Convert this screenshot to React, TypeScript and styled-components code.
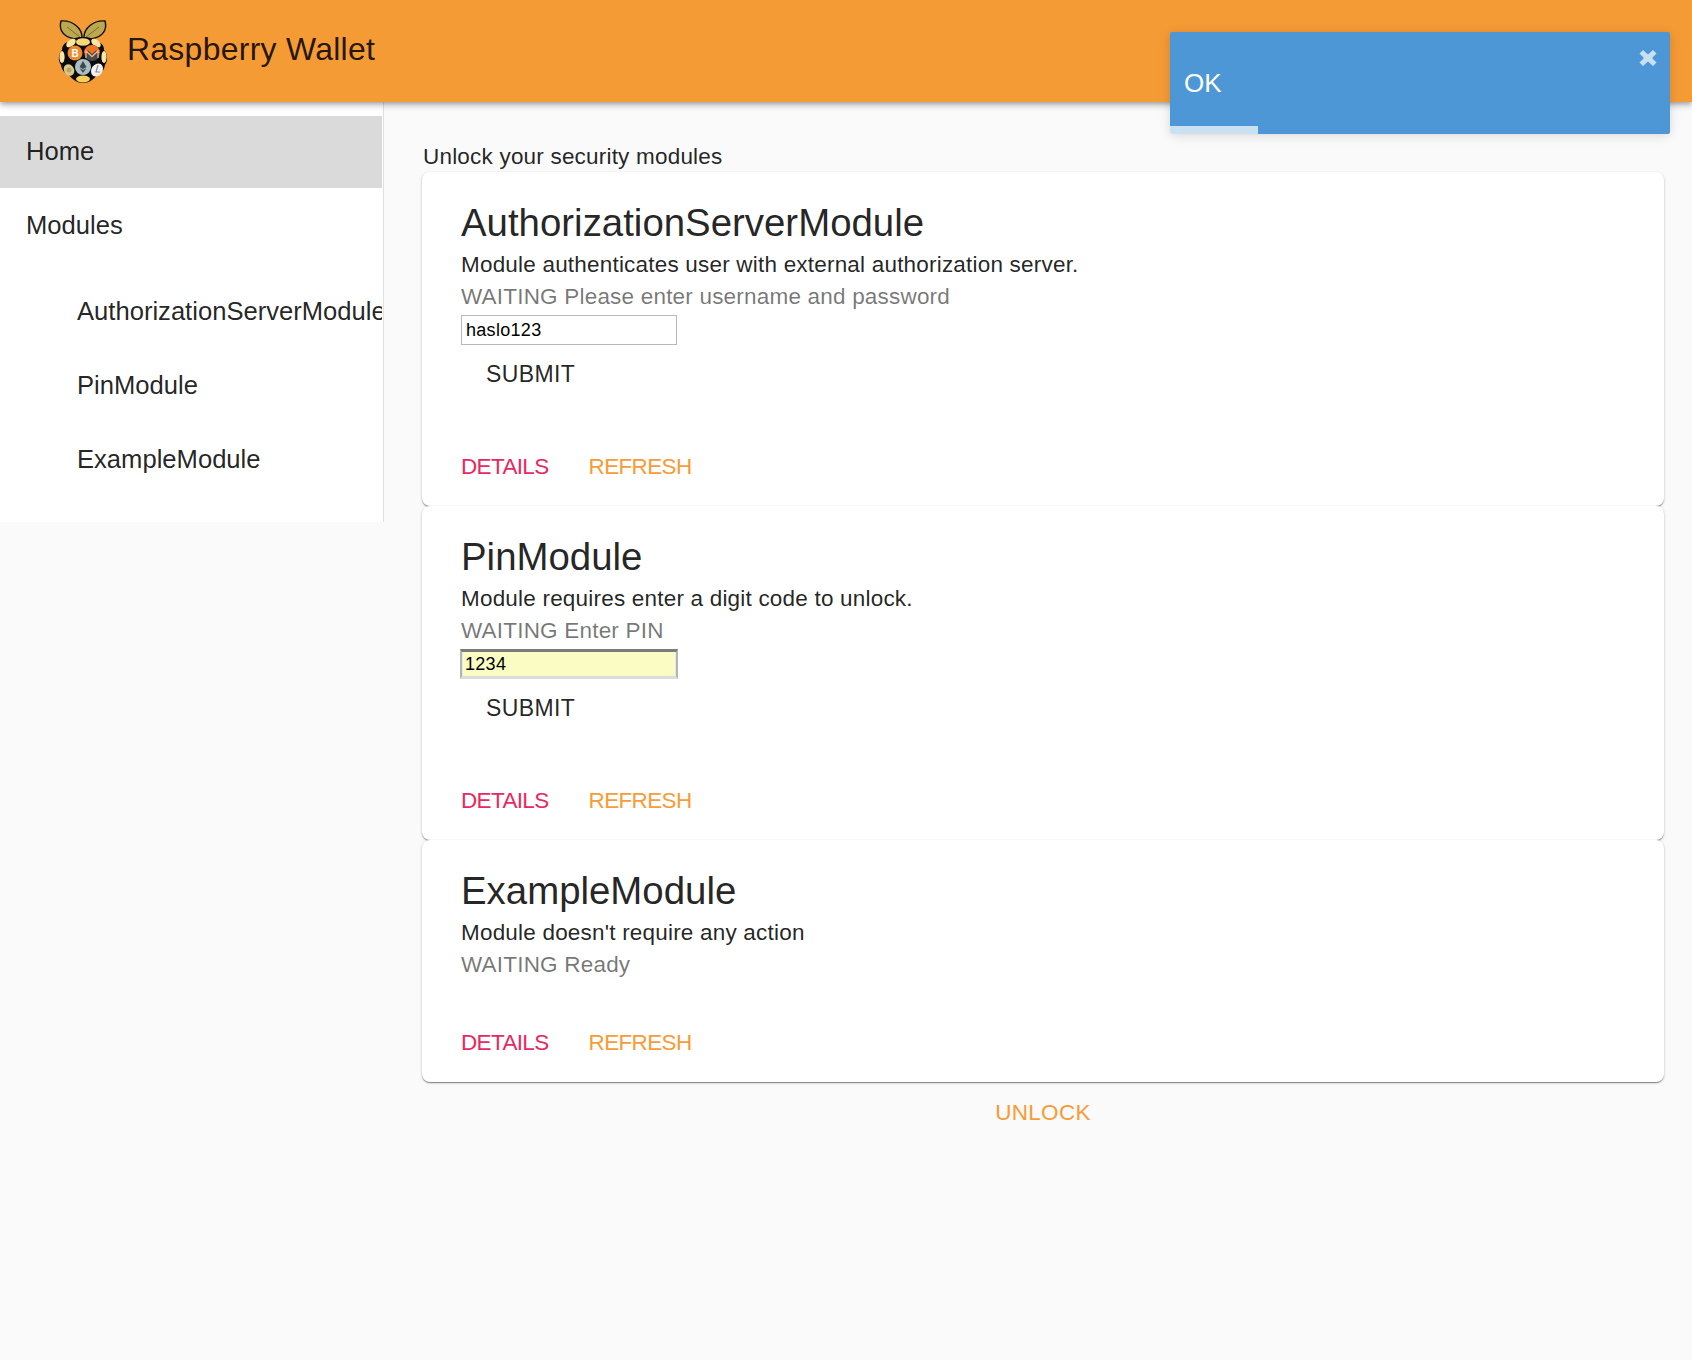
import React from "react";
import styled, { createGlobalStyle } from "styled-components";

const Global = createGlobalStyle`
  html, body { margin: 0; padding: 0; background: #fafafa; }
  body { font-family: "Liberation Sans", Arial, sans-serif; color: rgba(0,0,0,0.87); min-height: 1360px; }
`;

const Page = styled.div`
  position: relative;
  min-height: 1360px;
  background: #fafafa;
`;

const Header = styled.header`
  position: relative;
  z-index: 2;
  height: 102px;
  background: #f59b36;
  display: flex;
  align-items: center;
  padding-left: 58px;
  gap: 19px;
  box-shadow: 0 2px 4px -1px rgba(0,0,0,.2), 0 4px 5px rgba(0,0,0,.14), 0 1px 10px rgba(0,0,0,.12);
`;

const Brand = styled.h1`
  margin: -4px 0 0;
  font-size: 31.9px;
  font-weight: 400;
  letter-spacing: 0.3px;
  color: rgba(0,0,0,0.87);
`;

const Body = styled.div`
  display: flex;
  align-items: flex-start;
`;

const Sidebar = styled.nav`
  width: 383px;
  flex: none;
  height: 406px;
  background: #fff;
  border-right: 1px solid #e0e0e0;
  padding-top: 14px;
  overflow: hidden;
`;

const NavItem = styled.div<{ $active?: boolean; $nested?: boolean }>`
  height: 72px;
  margin: 0 1px 2px 0;
  display: flex;
  align-items: center;
  white-space: nowrap;
  overflow: hidden;
  padding-left: ${(p) => (p.$nested ? "77px" : "26px")};
  padding-bottom: ${(p) => (p.$nested ? "0" : "2px")};
  box-sizing: border-box;
  font-size: 25.6px;
  background: ${(p) => (p.$active ? "#dadada" : "transparent")};
  color: rgba(0,0,0,0.87);
`;

const NavGroup = styled.div`
  margin-top: 13px;
`;

const Main = styled.main`
  flex: 1;
  padding: 40px 28px 0 38px;
  min-width: 0;
`;

const Intro = styled.div`
  font-size: 22.5px;
  line-height: 30px;
  letter-spacing: 0.2px;
  margin-left: 1px;
`;

const Cards = styled.div`
  display: flex;
  flex-direction: column;
`;

const Card = styled.section<{ $h: number }>`
  position: relative;
  height: ${(p) => p.$h}px;
  box-sizing: border-box;
  background: #fff;
  border-radius: 8px;
  padding: 28px 39px 0;
  display: flex;
  flex-direction: column;
  box-shadow: 0 1px 3px rgba(0,0,0,.2), 0 1px 1px rgba(0,0,0,.22), 0 2px 1px -1px rgba(0,0,0,.2);
`;

const Title = styled.h2`
  margin: 0;
  font-size: 38.4px;
  line-height: 46px;
  font-weight: 400;
`;

const Desc = styled.p`
  margin: 3px 0 0;
  font-size: 22.5px;
  line-height: 32px;
  letter-spacing: 0.2px;
`;

const Status = styled.p`
  margin: 0;
  font-size: 22.5px;
  line-height: 32px;
  letter-spacing: 0.2px;
  color: rgba(0,0,0,0.54);
`;

const Field = styled.input<{ $filled?: boolean }>`
  display: block;
  width: ${(p) => (p.$filled ? "218px" : "216px")};
  height: 30px;
  margin: 2px 0 0 ${(p) => (p.$filled ? "-1px" : "0")};
  padding: 0 ${(p) => (p.$filled ? "3px" : "4px")};
  box-sizing: border-box;
  font-family: "Liberation Sans", Arial, sans-serif;
  font-size: 18px;
  letter-spacing: 0.3px;
  color: #000;
  outline: none;
  background: ${(p) => (p.$filled ? "#fbfcc4" : "#fff")};
  border-style: solid;
  border-width: ${(p) => (p.$filled ? "3px 2px 3px" : "1px")};
  border-color: ${(p) => (p.$filled ? "#7b7b7b #b4b4b4 #dcdcdc" : "#b8b8b8")};
  box-shadow: ${(p) => (p.$filled ? "inset 1px 0 0 #e8e8e8, inset -1px 0 0 #e8e8e8" : "none")};
`;

const Submit = styled.button`
  align-self: flex-start;
  margin: 0;
  padding: 1px 25px 0;
  height: 58px;
  border: 0;
  background: none;
  font-family: inherit;
  font-size: 23px;
  letter-spacing: 0.4px;
  color: rgba(0,0,0,0.87);
`;

const Actions = styled.div`
  margin-top: auto;
  height: 54px;
  display: flex;
  gap: 40px;
`;

const TextBtn = styled.span<{ $color: string }>`
  font-size: 22.5px;
  line-height: 26px;
  margin-top: 2px;
  letter-spacing: -0.65px;
  color: ${(p) => p.$color};
`;

const UnlockRow = styled.div`
  display: flex;
  justify-content: center;
  margin-top: 16px;
`;

const UnlockBtn = styled(TextBtn)`
  letter-spacing: 0.3px;
`;

const Toast = styled.div`
  position: absolute;
  z-index: 5;
  top: 32px;
  left: 1170px;
  width: 500px;
  height: 102px;
  box-sizing: border-box;
  background: #4e97d6;
  border-radius: 2px;
  color: #fff;
  padding: 34px 14px 0;
  font-size: 26px;
  line-height: 34px;
  box-shadow: 0 1px 10px rgba(0,0,0,.1), 0 2px 15px rgba(0,0,0,.05);
`;

const ToastClose = styled.span`
  position: absolute;
  top: 17px;
  right: 13px;
  display: flex;
`;

const Progress = styled.div`
  position: absolute;
  left: 0;
  bottom: 0;
  height: 8px;
  background: rgba(255,255,255,.7);
`;

const Logo = () => (
  <svg width="50" height="64" viewBox="0 0 50 64" aria-hidden="true" style={{ marginTop: 2 }}>
    <path d="M24 19C25 8 14 0 3 1 0 12 8 20 24 19z" fill="#bca84f" stroke="#111" strokeWidth="1.400" />
    <path d="M26 19C25 8 36 0 47 1 50 12 42 20 26 19z" fill="#bca84f" stroke="#111" strokeWidth="1.400" />
    <path d="M9 7l13 10M41 7L28 17" stroke="#4a4520" strokeWidth=".6" />
    <path d="M25 17c7 0 12 2 15 5 4 1 6 4 6 8 4 4 4 11 1 15-1 5-3 8-7 9-3 4-8 9-15 9s-12-5-15-9c-4-1-6-4-7-9-3-4-3-11 1-15 0-4 2-7 6-8 3-3 8-5 15-5z" fill="#0b0b0b" />
    <ellipse cx="25" cy="22" rx="7" ry="3.800" fill="#f7d878" />
    <ellipse cx="13" cy="23" rx="5.500" ry="3.200" fill="#fbe6a6" transform="rotate(-38 13 23)" />
    <ellipse cx="38" cy="23" rx="5.500" ry="3.200" fill="#fbe6a6" transform="rotate(38 38 23)" />
    <ellipse cx="4" cy="37" rx="2.600" ry="6" fill="#fbe6a6" />
    <ellipse cx="46" cy="37" rx="2.600" ry="6" fill="#fbe6a6" />
    <circle cx="17" cy="33" r="7.500" fill="#ef8a2e" />
    <text x="17" y="37" textAnchor="middle" fontSize="10" fontWeight="700" fill="#fff" fontFamily="Liberation Sans">B</text>
    <circle cx="34" cy="33" r="8" fill="#4a4a4a" />
    <path d="M26 33a8 8 0 0 1 16 0h-3.500v-3l-4.500 4-4.500-4v3z" fill="#ee7326" />
    <path d="M28 38v-7l6 5.500 6-5.500v7" fill="none" stroke="#f2b48a" strokeWidth="1.300" />
    <circle cx="25" cy="47" r="8" fill="#a9c0c4" />
    <path d="M25 41l3.500 6-3.500 2-3.500-2zM25 50l3.500-2-3.500 5-3.500-5z" fill="#3c4a4c" />
    <ellipse cx="11" cy="50" rx="5" ry="6" fill="#d8c88e" transform="rotate(-30 11 50)" />
    <circle cx="11" cy="50" r="2.500" fill="#b7a463" />
    <ellipse cx="39" cy="50" rx="5.500" ry="7" fill="#f2f2f2" transform="rotate(35 39 50)" />
    <path d="M40 45l-2 7h4" fill="none" stroke="#8d8d8d" strokeWidth="1.200" />
    <ellipse cx="25" cy="59" rx="7" ry="3.500" fill="#f5cf58" />
  </svg>
);

const modules = [
  { name: "AuthorizationServerModule", desc: "Module authenticates user with external authorization server.", status: "WAITING Please enter username and password", value: "haslo123", h: 334 },
  { name: "PinModule", desc: "Module requires enter a digit code to unlock.", status: "WAITING Enter PIN", value: "1234", filled: true, h: 334 },
  { name: "ExampleModule", desc: "Module doesn't require any action", status: "WAITING Ready", h: 242 },
];

export default function App() {
  return (
    <Page>
      <Global />
      <Header>
        <Logo />
        <Brand>Raspberry Wallet</Brand>
      </Header>
      <Toast>
        OK
        <ToastClose>
          <svg width="18" height="18" viewBox="0 0 18 18" aria-hidden="true">
            <path d="M4 1l5 4.500L14 1l3.500 3.500L13 9l4.500 4.500L14 17l-5-4.500L4 17 .5 13.500 5 9 .5 4.500z" fill="#c9dff3" />
          </svg>
        </ToastClose>
        <Progress style={{ width: "88px" }} />
      </Toast>
      <Body>
        <Sidebar>
          <NavItem $active>Home</NavItem>
          <NavItem>Modules</NavItem>
          <NavGroup>
            {modules.map((m) => (
              <NavItem $nested key={m.name}>{m.name}</NavItem>
            ))}
          </NavGroup>
        </Sidebar>
        <Main>
          <Intro>Unlock your security modules</Intro>
          <Cards>
            {modules.map((m) => (
              <Card $h={m.h} key={m.name}>
                <Title>{m.name}</Title>
                <Desc>{m.desc}</Desc>
                <Status>{m.status}</Status>
                {m.value && (
                  <>
                    <Field defaultValue={m.value} $filled={m.filled} />
                    <Submit>SUBMIT</Submit>
                  </>
                )}
                <Actions>
                  <TextBtn $color="#e8295f">DETAILS</TextBtn>
                  <TextBtn $color="#f69c38">REFRESH</TextBtn>
                </Actions>
              </Card>
            ))}
          </Cards>
          <UnlockRow>
            <UnlockBtn $color="#f69c38">UNLOCK</UnlockBtn>
          </UnlockRow>
        </Main>
      </Body>
    </Page>
  );
}
